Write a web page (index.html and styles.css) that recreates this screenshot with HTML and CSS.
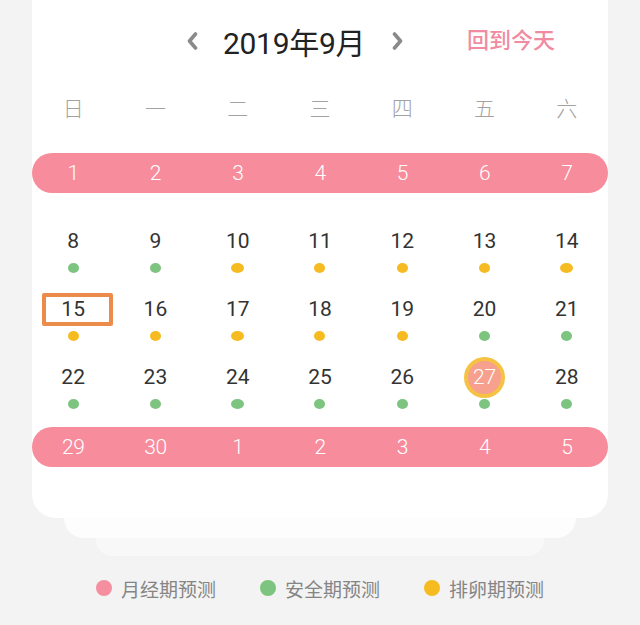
FILE: index.html
```html
<!DOCTYPE html>
<html lang="zh-CN">
<head>
<meta charset="utf-8">
<title>日历</title>
<link rel="stylesheet" href="styles.css">
</head>
<body>
<div class="stack">
  <div class="card">
    <div class="header">
      <svg class="chev" viewBox="0 0 11 18" width="11" height="18"><polyline points="8.5,2 2.5,9 8.5,16" /></svg>
      <div class="title">2019年9月</div>
      <svg class="chev next" viewBox="0 0 11 18" width="11" height="18"><polyline points="2.5,2 8.5,9 2.5,16" /></svg>
      <div class="today">回到今天</div>
    </div>
    <div class="weekdays">
      <span>日</span><span>一</span><span>二</span><span>三</span><span>四</span><span>五</span><span>六</span>
    </div>
    <div class="week period">
      <div class="band">
        <span>1</span><span>2</span><span>3</span><span>4</span><span>5</span><span>6</span><span>7</span>
      </div>
    </div>
    <div class="week">
      <div class="day"><span class="num">8</span><i class="dot g"></i></div>
      <div class="day"><span class="num">9</span><i class="dot g"></i></div>
      <div class="day"><span class="num">10</span><i class="dot y wide"></i></div>
      <div class="day"><span class="num">11</span><i class="dot y"></i></div>
      <div class="day"><span class="num">12</span><i class="dot y"></i></div>
      <div class="day"><span class="num">13</span><i class="dot y"></i></div>
      <div class="day"><span class="num">14</span><i class="dot y wide"></i></div>
    </div>
    <div class="week">
      <div class="day"><span class="num sel">15</span><i class="dot y"></i></div>
      <div class="day"><span class="num">16</span><i class="dot y"></i></div>
      <div class="day"><span class="num">17</span><i class="dot y wide"></i></div>
      <div class="day"><span class="num">18</span><i class="dot y"></i></div>
      <div class="day"><span class="num">19</span><i class="dot y"></i></div>
      <div class="day"><span class="num">20</span><i class="dot g"></i></div>
      <div class="day"><span class="num">21</span><i class="dot g"></i></div>
    </div>
    <div class="week">
      <div class="day"><span class="num">22</span><i class="dot g"></i></div>
      <div class="day"><span class="num">23</span><i class="dot g"></i></div>
      <div class="day"><span class="num">24</span><i class="dot g wide"></i></div>
      <div class="day"><span class="num">25</span><i class="dot g"></i></div>
      <div class="day"><span class="num">26</span><i class="dot g"></i></div>
      <div class="day"><span class="num now">27</span><i class="dot g"></i></div>
      <div class="day"><span class="num">28</span><i class="dot g"></i></div>
    </div>
    <div class="week period last">
      <div class="band">
        <span>29</span><span>30</span><span>1</span><span>2</span><span>3</span><span>4</span><span>5</span>
      </div>
    </div>
  </div>
  <div class="layer l2"></div>
  <div class="layer l3"></div>
</div>
<div class="legend">
  <div class="item"><i class="ldot p"></i><span>月经期预测</span></div>
  <div class="item"><i class="ldot g"></i><span>安全期预测</span></div>
  <div class="item"><i class="ldot y"></i><span>排卵期预测</span></div>
</div>
</body>
</html>
```
FILE: styles.css
```css
html, body {
  margin: 0;
  padding: 0;
}
body {
  background: #f3f3f3;
  font-family: Roboto, "Noto Sans CJK SC", sans-serif;
  width: 640px;
  height: 625px;
  overflow: hidden;
}
.stack {
  padding: 0 32px;
}
.card {
  background: #ffffff;
  border-radius: 0 0 24px 24px;
  padding-bottom: 35px;
}
.layer {
  margin: 0 auto;
  background: #fdfdfd;
}
.l2 {
  width: 512px;
  height: 20px;
  border-radius: 0 0 20px 20px;
}
.l3 {
  width: 448px;
  height: 18px;
  background: #f8f8f8;
  border-radius: 0 0 16px 16px;
}
.header {
  height: 82px;
  display: flex;
  align-items: center;
  padding-left: 155px;
  padding-right: 53px;
}
.chev polyline {
  fill: none;
  stroke: #8a8a8a;
  stroke-width: 3.6;
  stroke-linecap: round;
  stroke-linejoin: round;
}
.title {
  margin-left: 25px;
  margin-right: 27px;
  font-size: 30px;
  color: #222222;
  letter-spacing: -0.3px;
}
.today {
  margin-left: auto;
  margin-top: -6px;
  font-size: 22px;
  color: #f08ba2;
  font-weight: 500;
}
.weekdays {
  display: grid;
  grid-template-columns: repeat(7, 1fr);
  height: 50px;
  align-items: center;
  margin-bottom: 7px;
}
.weekdays span {
  text-align: center;
  font-size: 21px;
  font-weight: 300;
  color: #a2a2a2;
}
.week {
  display: grid;
  grid-template-columns: repeat(7, 1fr);
  height: 68px;
}
.week.period {
  display: flex;
  align-items: center;
}
.week.period.last {
  height: 72px;
}
.band {
  flex: 1;
  height: 40px;
  background: #f78c9c;
  border-radius: 20px;
  display: grid;
  grid-template-columns: repeat(7, 1fr);
  align-items: center;
}
.band span {
  text-align: center;
  color: #ffffff;
  font-size: 21px;
  font-weight: 300;
  letter-spacing: -0.5px;
}
.day {
  display: flex;
  flex-direction: column;
  align-items: center;
  padding-top: 22px;
}
.num {
  font-size: 21px;
  line-height: 24px;
  height: 24px;
  color: #333333;
  position: relative;
}
.num.sel::after {
  content: "";
  position: absolute;
  left: -19px;
  top: -4px;
  width: 71px;
  height: 33px;
  box-sizing: border-box;
  border: 4px solid #ec8c4a;
  border-radius: 2px;
}
.num.now {
  width: 41px;
  height: 41px;
  margin: -8px 0 -9px;
  line-height: 33px;
  box-sizing: border-box;
  border-radius: 50%;
  background: #f6a08d;
  border: 4px solid #f5c243;
  color: #ffffff;
  text-align: center;
  font-weight: 300;
}
.dot {
  display: block;
  width: 11px;
  height: 10px;
  border-radius: 50%;
  margin-top: 10px;
}
.dot.wide {
  width: 13px;
}
.g { background: #7cc47f; }
.y { background: #f7bb22; }
.p { background: #f58fa0; }
.legend {
  margin-top: 14px;
  display: flex;
  justify-content: center;
  gap: 44px;
  height: 36px;
  align-items: center;
}
.item {
  display: flex;
  align-items: center;
}
.ldot {
  width: 16px;
  height: 16px;
  border-radius: 50%;
  margin-right: 9px;
}
.item span {
  font-size: 19px;
  color: #858585;
}
```
